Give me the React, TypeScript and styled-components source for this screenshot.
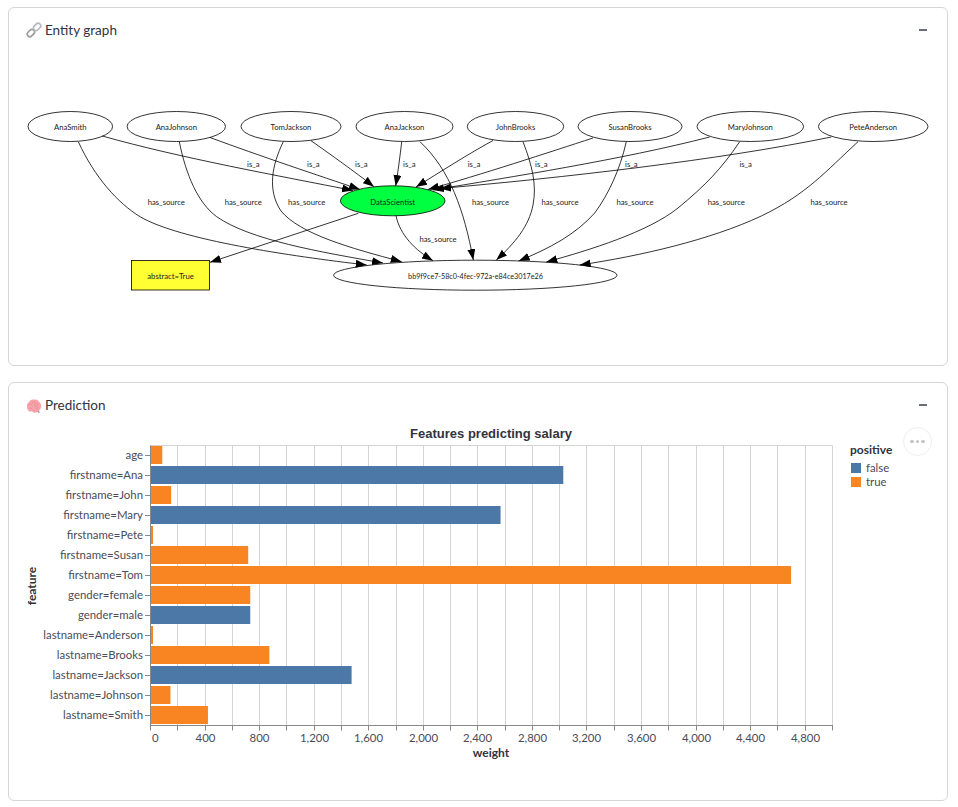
import styled, { createGlobalStyle } from 'styled-components'

const GlobalStyle = createGlobalStyle`
  html, body {
    margin: 0;
    padding: 0;
    background: #fff;
  }
  body {
    font-family: "Lato", "Noto Sans", sans-serif;
    color: #31333f;
  }
`

const Page = styled.div`
  display: flex;
  flex-direction: column;
  gap: 16px;
  width: 958px;
  box-sizing: border-box;
  padding: 7px 10px 0 8px;
`

const Panel = styled.section<{ $height: number }>`
  height: ${(p) => p.$height}px;
  box-sizing: border-box;
  border: 1px solid #d6d6d8;
  border-radius: 6px;
  display: flex;
  flex-direction: column;
`

const PanelHeader = styled.header`
  display: flex;
  align-items: center;
  height: 44px;
  flex: none;
  box-sizing: border-box;
  padding: 0 20px 0 17px;
`

const PanelTitle = styled.h2`
  margin: 0;
  display: flex;
  align-items: center;
  gap: 3px;
  font-size: 13.5px;
  font-weight: 400;
  color: #31333f;
  flex: 1;
`

const Collapse = styled.span`
  width: 8px;
  height: 2px;
  background: #6b6d78;
`

const Canvas = styled.div`
  position: relative;
  flex: 1;
`

const DrawingSvg = styled.svg`
  display: block;
`

const MenuButton = styled.button`
  position: absolute;
  top: 0;
  left: 894px;
  width: 29px;
  height: 29px;
  padding: 0;
  border: 1px solid #eee;
  border-radius: 50%;
  background: #fff;
  display: flex;
  align-items: center;
  justify-content: center;
  gap: 2px;
`

const MenuDot = styled.i`
  width: 3.5px;
  height: 3.5px;
  border-radius: 50%;
  background: #c4c4c8;
`

const LinkIcon = () => (
  <svg width="16" height="16" viewBox="0 0 16 16" fill="none">
    <g stroke="#9a9ca0" strokeWidth="1.7">
      <rect x="-4" y="-2.6" width="8" height="5.2" rx="2.6" transform="translate(4.9 11.1) rotate(-45)" />
      <rect x="-4" y="-2.6" width="8" height="5.2" rx="2.6" transform="translate(11.1 4.9) rotate(-45)" stroke="#b7b9bc" />
    </g>
  </svg>
)

const BrainIcon = () => (
  <svg width="16" height="16" viewBox="0 0 16 16">
    <g transform="translate(0 -0.5) scale(1 1.27)">
      <path
        d="M1 8.6C.5 6.5 1.6 4.8 3.2 4.3 4 2.6 6.2 1.8 8 2.6c2-.8 4.3-.1 5 1.7 1.6.6 2.6 2.3 2 4.3-.3 1.5-1.500 2.300-3 2.300-.4 1.300-1.500 2-2.800 1.700-1.200.4-2.500 0-3.200-.9C4 12 2.500 11.600 1.900 10.600 1.500 10.100 1.200 9.400 1 8.600z"
        fill="#f7a3aa"
      />
      <path
        d="M3 6.500c1-.9 2-.5 2.500.3M6 3.800c.6 1 .3 2-.6 2.500M9 3.500c-.5 1 0 2 1 2.300M12 5c-.8.5-1 1.500-.4 2.300M3.500 9.500c1-.8 2.300-.4 2.800.6M8 7.500c1-.5 2 0 2.300 1M12.500 9c-1-.3-1.800.2-2 1.100M7 11c.6-.4 1.300-.3 1.800.2"
        fill="none"
        stroke="#e8808c"
        strokeWidth=".6"
      />
      <path d="M11 11.500l1.500 1.500 1.200-.5-.8-1.700z" fill="#c9838c" />
    </g>
  </svg>
)

type GraphNode = { label: string; cx: number; rx: number }

const people: GraphNode[] = [
  { label: 'AnaSmith', cx: 70.3, rx: 42.3 },
  { label: 'AnaJohnson', cx: 176.3, rx: 49.2 },
  { label: 'TomJackson', cx: 291, rx: 50 },
  { label: 'AnaJackson', cx: 404.5, rx: 48.5 },
  { label: 'JohnBrooks', cx: 515.5, rx: 48.2 },
  { label: 'SusanBrooks', cx: 630, rx: 52 },
  { label: 'MaryJohnson', cx: 750.3, rx: 53.3 },
  { label: 'PeteAnderson', cx: 873.2, rx: 54.8 },
]

const edges = [
  'M102.3 136C180 158 280 176 353 190.500',
  'M210 137.500C260 156 320 176 360 189.500',
  'M311 140.700C330 154 355 172 374 186.700',
  'M401.700 142C400 156 398 172 395.700 186',
  'M493 140.500C470 153 440 172 416 187',
  'M593 138C550 152 480 175 428 189.500',
  'M709.700 137C620 160 510 177 433 190',
  'M831.300 137C720 160 560 178 440 188.500',
  'M78.300 141.700C95 178 118 203 140 216.700C180 240 290 256 366.700 265',
  'M179.300 141.700C186 175 198 203 216.700 216.700C250 240 320 252 383 263',
  'M283.300 141.700C272 165 267 190 281 211C300 234 350 248 401.700 261.700',
  'M420 141.700C450 170 464 210 473.300 260',
  'M396 215.700C400 235 415 250 433 260.700',
  'M523 141.700C532 165 537 185 533 205C529 226 515 243 496.300 260',
  'M626.300 141.700C620 170 608 195 594.700 213C575 235 550 248 518.700 261',
  'M739.700 141.700C722 168 706 185 678 208C648 232 590 250 546.300 262',
  'M858 141.700C825 172 807 194 761.300 216C710 240 640 256 579.700 265',
  'M358.300 213.300L210 262.300',
]

const isALabels = [253.3, 313.3, 361.3, 409.3, 474, 541.3, 631.3, 745.7]

const hasSourceLabels: [number, number][] = [
  [166.3, 202.300],
  [243.3, 202.300],
  [306.7, 202.300],
  [490.5, 202.300],
  [560, 202.300],
  [635, 202.300],
  [726.3, 202.300],
  [829, 202.300],
  [438, 239.300],
]

const GraphText = styled.text<{ $size?: number }>`
  font-family: "Lato", "Noto Sans", sans-serif;
  font-size: ${(p) => p.$size ?? 7.7}px;
  fill: #1c1c24;
  text-anchor: middle;
`

const Shape = styled.ellipse`
  stroke: #000;
  stroke-width: 0.8;
`

const EdgeLine = styled.path`
  fill: none;
  stroke: #000;
  stroke-width: 0.8;
`

// graph coordinates are page coordinates, the viewBox shifts them into the panel
const EntityGraph = () => (
  <DrawingSvg width="937" height="313" viewBox="9 52 937 313">
    <defs>
      <marker id="arrow" markerUnits="userSpaceOnUse" markerWidth="12" markerHeight="9" refX="11" refY="4" orient="auto">
        <path d="M0 0L11 4L0 8z" fill="#000" />
      </marker>
    </defs>
    {people.map((n) => (
      <Shape key={n.label} cx={n.cx} cy={126.5} rx={n.rx} ry={15} fill="#fff" />
    ))}
    {edges.map((d) => (
      <EdgeLine key={d} d={d} markerEnd="url(#arrow)" />
    ))}
    <Shape cx={392.7} cy={200.8} rx={52.3} ry={15} fill="#00ff40" />
    <Shape cx={475.3} cy={275.2} rx={141.7} ry={15} fill="none" />
    <rect x="131.5" y="260.5" width="78" height="29.500" fill="#ffff33" stroke="#000" strokeWidth="0.8" />
    {people.map((n) => (
      <GraphText key={n.label} x={n.cx} y={130}>
        {n.label}
      </GraphText>
    ))}
    <GraphText x={392.7} y={205}>DataScientist</GraphText>
    <GraphText $size={7.2} x={475.5} y={279}>bb9f9ce7-58c0-4fec-972a-e84ce3017e26</GraphText>
    <GraphText x={170.5} y={279}>abstract=True</GraphText>
    {isALabels.map((x) => (
      <GraphText key={x} x={x} y={167}>is_a</GraphText>
    ))}
    {hasSourceLabels.map(([x, y]) => (
      <GraphText key={x} x={x} y={y + 2.5}>has_source</GraphText>
    ))}
  </DrawingSvg>
)

type Weight = { feature: string; weight: number; positive: boolean }

const BLUE = '#4c78a8'
const ORANGE = '#f98522'

const weights: Weight[] = [
  { feature: 'age', weight: 90, positive: true },
  { feature: 'firstname=Ana', weight: 3030, positive: false },
  { feature: 'firstname=John', weight: 155, positive: true },
  { feature: 'firstname=Mary', weight: 2570, positive: false },
  { feature: 'firstname=Pete', weight: 22, positive: true },
  { feature: 'firstname=Susan', weight: 720, positive: true },
  { feature: 'firstname=Tom', weight: 4700, positive: true },
  { feature: 'gender=female', weight: 735, positive: true },
  { feature: 'gender=male', weight: 735, positive: false },
  { feature: 'lastname=Anderson', weight: 22, positive: true },
  { feature: 'lastname=Brooks', weight: 875, positive: true },
  { feature: 'lastname=Jackson', weight: 1478, positive: false },
  { feature: 'lastname=Johnson', weight: 150, positive: true },
  { feature: 'lastname=Smith', weight: 425, positive: true },
]

const xLabels = [0, 400, 800, 1200, 1600, 2000, 2400, 2800, 3200, 3600, 4000, 4400, 4800]
const xTicks = Array.from({ length: 26 }, (_, i) => i * 200)

const PLOT_LEFT = 150
const PLOT_TOP = 445.5
const PLOT_BOTTOM = 725.5
const SCALE = 0.1364
const xScale = (v: number) => Math.round(PLOT_LEFT + v * SCALE) + 0.5

const ChartTitle = styled.text`
  font-family: "Liberation Sans", Arial, sans-serif;
  font-size: 13px;
  font-weight: 700;
  fill: #31333f;
  text-anchor: middle;
`

const TickLabel = styled.text<{ $anchor: string }>`
  font-family: "Lato", "Noto Sans", sans-serif;
  font-size: 11.4px;
  fill: #4a4c58;
  text-anchor: ${(p) => p.$anchor};
`

const AxisTitle = styled.text<{ $anchor?: string }>`
  font-family: "Lato", "Noto Sans", sans-serif;
  font-size: 12px;
  font-weight: 700;
  fill: #31333f;
  text-anchor: ${(p) => p.$anchor ?? 'middle'};
`

const WeightChart = () => (
  <DrawingSvg width="937" height="373" viewBox="9 427 937 373">
    <ChartTitle x={491} y={438}>Features predicting salary</ChartTitle>
    {xTicks.map((t) => (
      <line key={t} x1={xScale(t)} x2={xScale(t)} y1={PLOT_TOP} y2={PLOT_BOTTOM} stroke="#d4d4d4" />
    ))}
    <line x1={PLOT_LEFT} x2={832.5} y1={PLOT_TOP} y2={PLOT_TOP} stroke="#d4d4d4" />
    {weights.map((w, i) => (
      <rect
        key={w.feature}
        x={PLOT_LEFT}
        y={446 + i * 20}
        width={w.weight * SCALE}
        height={18}
        fill={w.positive ? ORANGE : BLUE}
      />
    ))}
    {weights.map((w, i) => (
      <g key={w.feature}>
        <line x1={145} x2={150} y1={455.5 + i * 20} y2={455.5 + i * 20} stroke="#888" />
        <TickLabel $anchor="end" x={143} y={458.5 + i * 20}>{w.feature}</TickLabel>
      </g>
    ))}
    <line x1={150.5} x2={150.5} y1={PLOT_TOP} y2={PLOT_BOTTOM} stroke="#888" />
    <line x1={150} x2={833} y1={PLOT_BOTTOM} y2={PLOT_BOTTOM} stroke="#888" />
    {xTicks.map((t) => (
      <line key={t} x1={xScale(t)} x2={xScale(t)} y1={PLOT_BOTTOM} y2={730.5} stroke="#888" />
    ))}
    {xLabels.map((t) => (
      <TickLabel key={t} $anchor={t === 0 ? 'start' : 'middle'} x={t === 0 ? 152 : xScale(t)} y={742}>
        {t.toLocaleString('en-US')}
      </TickLabel>
    ))}
    <AxisTitle x={491} y={757}>weight</AxisTitle>
    <AxisTitle transform="translate(36 586) rotate(-90)">feature</AxisTitle>
    <AxisTitle $anchor="start" x={850} y={454}>positive</AxisTitle>
    <rect x={851} y={463} width={10} height={10} fill={BLUE} />
    <TickLabel $anchor="start" x={866} y={472}>false</TickLabel>
    <rect x={851} y={477} width={10} height={10} fill={ORANGE} />
    <TickLabel $anchor="start" x={866} y={486}>true</TickLabel>
  </DrawingSvg>
)

export default function App() {
  return (
    <>
      <GlobalStyle />
      <Page>
        <Panel $height={359}>
          <PanelHeader>
            <PanelTitle>
              <LinkIcon />
              Entity graph
            </PanelTitle>
            <Collapse />
          </PanelHeader>
          <Canvas>
            <EntityGraph />
          </Canvas>
        </Panel>
        <Panel $height={419}>
          <PanelHeader>
            <PanelTitle>
              <BrainIcon />
              Prediction
            </PanelTitle>
            <Collapse />
          </PanelHeader>
          <Canvas>
            <WeightChart />
            <MenuButton aria-label="chart menu">
              <MenuDot />
              <MenuDot />
              <MenuDot />
            </MenuButton>
          </Canvas>
        </Panel>
      </Page>
    </>
  )
}
